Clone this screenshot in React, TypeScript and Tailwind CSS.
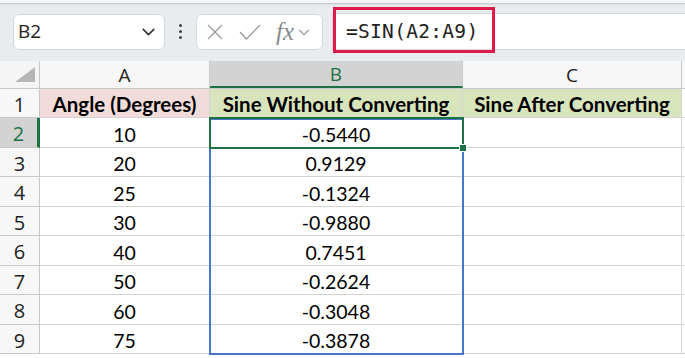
import React from 'react'

type Row = { n: number; a: string; b: string; c?: string; head?: boolean; h: number }

const ROWS: Row[] = [
  { n: 1, a: 'Angle (Degrees)', b: 'Sine Without Converting', c: 'Sine After Converting', head: true, h: 29 },
  { n: 2, a: '10', b: '-0.5440', h: 30 },
  { n: 3, a: '20', b: '0.9129', h: 29 },
  { n: 4, a: '25', b: '-0.1324', h: 30 },
  { n: 5, a: '30', b: '-0.9880', h: 29 },
  { n: 6, a: '40', b: '0.7451', h: 30 },
  { n: 7, a: '50', b: '-0.2624', h: 29 },
  { n: 8, a: '60', b: '-0.3048', h: 30 },
  { n: 9, a: '75', b: '-0.3878', h: 29 },
]

const UI = { fontFamily: '"Open Sans", "Noto Sans", sans-serif' }
const CELL = { fontFamily: 'Lato, "Liberation Sans", sans-serif' }

function Chevron({ size = 16, color = '#333' }: { size?: number; color?: string }) {
  return (
    <svg width={size} height={size} viewBox="0 0 16 16" fill="none">
      <path d="M3 6l5 5 5-5" stroke={color} strokeWidth="1.5" strokeLinecap="round" strokeLinejoin="round" />
    </svg>
  )
}

function Toolbar() {
  return (
    <div className="relative h-[61px] bg-[#e9ecef]" style={UI}>
      {/* ribbon edge */}
      <div className="h-[3px] bg-[#f4f5f7] shadow-[0_1px_2px_rgba(0,0,0,0.18)]" />
      <div className="flex items-center pt-[10px] pl-[13px]">
        {/* name box */}
        <div className="flex h-[36px] w-[152px] items-center justify-between rounded-[6px] border border-[#d4d7db] bg-white pl-[4px] pr-[7px]">
          <span className="text-[19px] text-[#222]">B2</span>
          <Chevron size={17} />
        </div>
        {/* splitter dots */}
        <div className="flex w-[31px] flex-col items-center gap-[3px]">
          <span className="h-[3px] w-[3px] rounded-full bg-[#444]" />
          <span className="h-[3px] w-[3px] rounded-full bg-[#444]" />
          <span className="h-[3px] w-[3px] rounded-full bg-[#444]" />
        </div>
        {/* fx box */}
        <div className="flex h-[36px] w-[127px] items-center rounded-[6px] border border-[#d4d7db] bg-white pl-[9px]">
          <svg width="18" height="18" viewBox="0 0 18 18" fill="none">
            <path d="M2 2l14 14M16 2L2 16" stroke="#9a9a9a" strokeWidth="1.3" />
          </svg>
          <svg className="ml-[15px]" width="22" height="18" viewBox="0 0 22 18" fill="none">
            <path d="M1 9l6.5 7L21 2" stroke="#9a9a9a" strokeWidth="1.3" />
          </svg>
          <span
            className="ml-[15px] text-[25px] italic leading-none text-[#8a8a8a]"
            style={{ fontFamily: '"Liberation Serif", "DejaVu Serif", serif' }}
          >
            fx
          </span>
          <span className="ml-[3px]">
            <Chevron size={14} color="#9a9a9a" />
          </span>
        </div>
        {/* formula bar */}
        <div className="ml-[9px] flex h-[37px] flex-1 items-center border-y border-l border-[#d4d7db] bg-white pl-[13px]">
          <span
            className="text-[19.5px] tracking-[0.3px] text-[#222]"
            style={{ fontFamily: '"DejaVu Sans Mono", "Liberation Mono", monospace' }}
          >
            =SIN(A2:A9)
          </span>
        </div>
      </div>
      {/* annotation */}
      <div className="absolute left-[333px] top-[7px] h-[46px] w-[162px] border-[3px] border-[#e0194b]" />
    </div>
  )
}

function Sheet() {
  return (
    <div className="relative" style={CELL}>
      {/* column headers */}
      <div className="flex h-[28px] border-b border-[#c8c8c8]" style={UI}>
        <div className="flex w-[40px] items-end justify-end border-r border-[#c8c8c8] bg-[#f5f5f5] pb-[6px] pr-[4px]">
          <svg width="20" height="15" viewBox="0 0 20 15">
            <path d="M20 0V15H0Z" fill="#b7b7b7" />
          </svg>
        </div>
        <div className="flex w-[170px] items-center justify-center border-r border-[#c8c8c8] bg-[#f7f7f7] pt-[1px] text-[19px] text-[#222]">A</div>
        <div className="flex w-[253px] items-center justify-center border-r border-b-[2px] border-r-[#c8c8c8] border-b-[#1e7145] bg-[#d3d3d3] pt-[1px] text-[19px] text-[#1e7145]">B</div>
        <div className="flex w-[219px] items-center justify-center border-r border-[#c8c8c8] bg-[#f7f7f7] pt-[1px] text-[19px] text-[#222]">C</div>
        <div className="flex-1 bg-[#f7f7f7]" />
      </div>

      {ROWS.map((r) => {
        const sel = r.n === 2
        return (
          <div key={r.n} className="flex" style={{ height: r.h }}>
            <div
              className={
                sel
                  ? 'flex w-[40px] items-center justify-center border-b border-r-[3px] border-b-[#c8c8c8] border-r-[#1e7145] bg-[#d3d3d3] pt-[3px] text-[20px] text-[#1e7145]'
                  : 'flex w-[40px] items-center justify-center border-b border-r border-[#c8c8c8] bg-[#f7f7f7] pt-[3px] text-[20px] text-[#222]'
              }
              style={UI}
            >
              {r.n}
            </div>
            <div
              className={
                r.head
                  ? 'flex w-[170px] items-center justify-center border-b border-r border-[#d4d4d4] bg-[#f2dcdb] pt-[3px] text-[20.5px] font-bold text-black'
                  : 'flex w-[170px] items-center justify-center border-b border-r border-[#d4d4d4] pt-[4px] text-[19.5px] text-black'
              }
            >
              {r.a}
            </div>
            <div
              className={
                r.head
                  ? 'flex w-[253px] items-center justify-center border-b border-r border-[#d4d4d4] bg-[#d8e4bc] pt-[3px] text-[20.5px] font-bold text-black'
                  : 'flex w-[253px] items-center justify-center border-b border-r border-[#d4d4d4] pt-[4px] text-[19.5px] text-black'
              }
            >
              {r.b}
            </div>
            <div
              className={
                r.head
                  ? 'flex w-[219px] items-center justify-center border-b border-r border-[#d4d4d4] bg-[#d8e4bc] pt-[3px] text-[20.5px] font-bold text-black'
                  : 'flex w-[219px] items-center justify-center border-b border-r border-[#d4d4d4] pt-[4px] text-[19.5px] text-black'
              }
            >
              {r.c ?? ''}
            </div>
            <div className="flex-1 border-b border-[#d4d4d4]" />
          </div>
        )
      })}

      {/* spill range outline B2:B9 */}
      <div className="pointer-events-none absolute left-[209px] top-[57px] h-[237px] w-[255px] border-[2px] border-[#4a76c9]" />
      {/* active cell B2 */}
      <div className="pointer-events-none absolute left-[209px] top-[56px] h-[32px] w-[255px] border-[2px] border-[#1e7145]" />
      {/* fill handle */}
      <div className="pointer-events-none absolute left-[459px] top-[83px] h-[8px] w-[8px] border border-white bg-[#1e7145]" />
    </div>
  )
}

export default function App() {
  return (
    <div className="h-[358px] w-[685px] overflow-hidden bg-white">
      <Toolbar />
      <Sheet />
    </div>
  )
}
